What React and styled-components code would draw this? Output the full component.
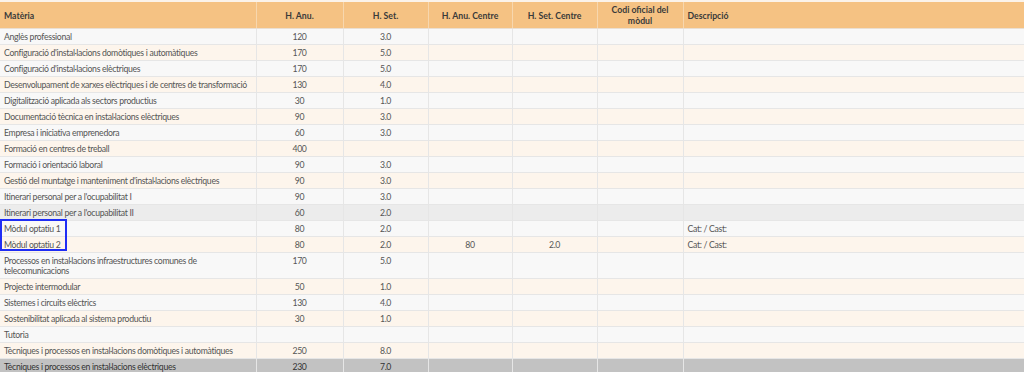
import React from "react";
import styled, { createGlobalStyle } from "styled-components";

const GlobalStyle = createGlobalStyle`
  html, body {
    margin: 0;
    padding: 0;
    background: #fbf3ea;
  }
  body {
    font-family: Lato, "Noto Sans", sans-serif;
  }
`;

const Page = styled.div`
  position: relative;
  padding-top: 2px;
  width: 1024px;
`;

const Table = styled.table`
  width: 1024px;
  border-collapse: collapse;
  table-layout: fixed;
  font-size: 8.7px;
  letter-spacing: -0.32px;
  color: #555;
`;

const HeadCell = styled.th`
  background: #f5c283;
  color: #3a3a3a;
  font-weight: 700;
  letter-spacing: 0;
  line-height: 11px;
  height: 26px;
  padding: 2px 10px 1px;
  text-align: ${(p) => (p.$left ? "left" : "center")};
  padding-left: ${(p) => (p.$left ? "4px" : "10px")};
  border-right: 1px solid #f7d7ae;
  border-bottom: 1px solid #eadfd2;
  vertical-align: middle;
  box-sizing: border-box;
`;

const rowColors = {
  plain: "#f8f8f8",
  cream: "#fdf5ec",
  hover: "#ececec",
  active: "#c2c2c2",
};

const Row = styled.tr`
  background: ${(p) => rowColors[p.$tone]};
  color: ${(p) => (p.$tone === "active" ? "#333" : "#555")};
`;

const Cell = styled.td`
  line-height: 10px;
  padding: 3px 4px 2px;
  text-align: ${(p) => (p.$center ? "center" : "left")};
  border-bottom: 1px solid #e6e6e6;
  border-right: 1px solid #e6e6e6;
  vertical-align: top;
  overflow: hidden;
`;

const Selection = styled.div`
  position: absolute;
  left: 0;
  top: 219px;
  width: 63px;
  height: 28px;
  border: 2px solid #1f2df5;
  pointer-events: none;
`;

const columns = [
  { label: "Matèria", width: 256, left: true },
  { label: "H. Anu.", width: 87 },
  { label: "H. Set.", width: 85 },
  { label: "H. Anu. Centre", width: 84 },
  { label: "H. Set. Centre", width: 85 },
  { label: "Codi oficial del mòdul", width: 86 },
  { label: "Descripció", width: 341, left: true },
];

const rows = [
  ["Anglès professional", "120", "3.0"],
  ["Configuració d'instal·lacions domòtiques i automàtiques", "170", "5.0"],
  ["Configuració d'instal·lacions elèctriques", "170", "5.0"],
  ["Desenvolupament de xarxes elèctriques i de centres de transformació", "130", "4.0"],
  ["Digitalització aplicada als sectors productius", "30", "1.0"],
  ["Documentació tècnica en instal·lacions elèctriques", "90", "3.0"],
  ["Empresa i iniciativa emprenedora", "60", "3.0"],
  ["Formació en centres de treball", "400", ""],
  ["Formació i orientació laboral", "90", "3.0"],
  ["Gestió del muntatge i manteniment d'instal·lacions elèctriques", "90", "3.0"],
  ["Itinerari personal per a l'ocupabilitat I", "90", "3.0"],
  ["Itinerari personal per a l'ocupabilitat II", "60", "2.0", "", "", "", "", "hover"],
  ["Mòdul optatiu 1", "80", "2.0", "", "", "", "Cat: / Cast:"],
  ["Mòdul optatiu 2", "80", "2.0", "80", "2.0", "", "Cat: / Cast:"],
  ["Processos en instal·lacions infraestructures comunes de telecomunicacions", "170", "5.0"],
  ["Projecte intermodular", "50", "1.0"],
  ["Sistemes i circuits elèctrics", "130", "4.0"],
  ["Sostenibilitat aplicada al sistema productiu", "30", "1.0"],
  ["Tutoria", "", ""],
  ["Tècniques i processos en instal·lacions domòtiques i automàtiques", "250", "8.0"],
  ["Tècniques i processos en instal·lacions elèctriques", "230", "7.0", "", "", "", "", "active"],
];

const App = () => {
  return (
    <Page>
      <GlobalStyle />
      <Table>
        <colgroup>
          {columns.map((c) => (
            <col key={c.label} style={{ width: c.width }} />
          ))}
        </colgroup>
        <thead>
          <tr>
            {columns.map((c) => (
              <HeadCell key={c.label} $left={c.left}>
                {c.label}
              </HeadCell>
            ))}
          </tr>
        </thead>
        <tbody>
          {rows.map((r, i) => {
            const tone = r[7] || (i % 2 === 0 ? "plain" : "cream");
            return (
              <Row key={r[0]} $tone={tone}>
                <Cell>{r[0]}</Cell>
                <Cell $center>{r[1]}</Cell>
                <Cell $center>{r[2]}</Cell>
                <Cell $center>{r[3] || ""}</Cell>
                <Cell $center>{r[4] || ""}</Cell>
                <Cell $center>{r[5] || ""}</Cell>
                <Cell>{r[6] || ""}</Cell>
              </Row>
            );
          })}
        </tbody>
      </Table>
      <Selection />
    </Page>
  );
};

export default App;
